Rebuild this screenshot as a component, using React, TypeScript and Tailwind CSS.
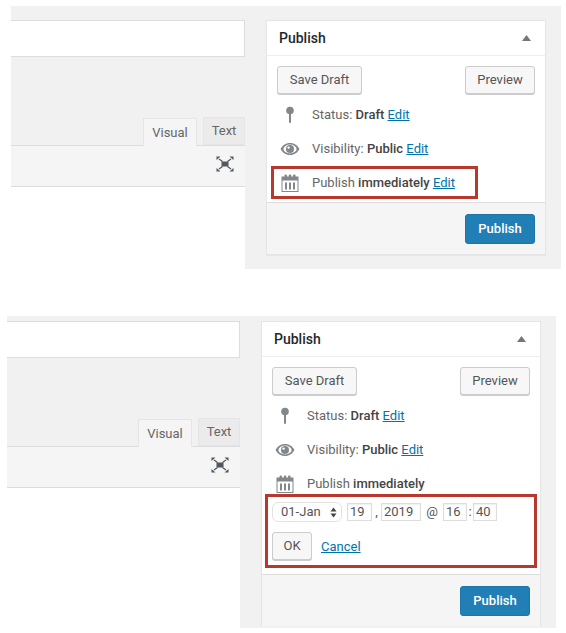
import type { ReactNode } from 'react'

const font = 'font-["Roboto",sans-serif]'

function PinIcon() {
  return (
    <svg width="10" height="18" viewBox="0 0 10 18" className="text-[#82878c]">
      <circle cx="5" cy="4.5" r="3.8" fill="currentColor" />
      <rect x="4" y="7" width="2" height="10" rx="1" fill="currentColor" />
    </svg>
  )
}

function EyeIcon() {
  return (
    <svg width="20" height="14" viewBox="0 0 20 14" className="text-[#82878c]">
      <path d="M10 1C5.6 1 2.2 3.6.6 7c1.6 3.4 5 6 9.4 6s7.8-2.6 9.4-6C17.8 3.6 14.4 1 10 1z" fill="currentColor" />
      <ellipse cx="10" cy="7" rx="6.6" ry="4.4" fill="#fff" />
      <circle cx="10" cy="7" r="4" fill="currentColor" />
      <circle cx="8.6" cy="5.6" r="1.2" fill="#fff" />
    </svg>
  )
}

function CalendarIcon() {
  return (
    <svg width="18" height="18" viewBox="0 0 18 18" className="text-[#82878c]">
      <rect x="1" y="3" width="16" height="14.5" fill="none" stroke="currentColor" strokeWidth="1" />
      <rect x="1" y="3" width="16" height="3.5" fill="currentColor" />
      <rect x="3.5" y="0.5" width="2.5" height="4" rx="1" fill="currentColor" />
      <rect x="7.8" y="0.5" width="2.5" height="4" rx="1" fill="currentColor" />
      <rect x="12" y="0.5" width="2.5" height="4" rx="1" fill="currentColor" />
      <rect x="4" y="8.5" width="2" height="7" fill="currentColor" />
      <rect x="8" y="8.5" width="2" height="7" fill="currentColor" />
      <rect x="12" y="8.5" width="2" height="7" fill="currentColor" />
    </svg>
  )
}

function ExpandIcon() {
  return (
    <svg width="18" height="16" viewBox="0 0 18 16" className="text-[#50575e]">
      <rect x="5.5" y="5.5" width="7" height="5" fill="currentColor" />
      <path d="M3 3l3.5 2.5M15 3l-3.500 2.500M3 13l3.500-2.500M15 13l-3.500-2.500" stroke="currentColor" strokeWidth="1.200" fill="none" />
      <path d="M0.500 0.500h4l-4 3.500zM17.500 0.500h-4l4 3.500zM0.500 15.500h4l-4-3.500zM17.500 15.500h-4l4-3.500z" fill="currentColor" />
    </svg>
  )
}

function EditLink({ children = 'Edit' }: { children?: ReactNode }) {
  return <a className="text-[#0073aa] underline">{children}</a>
}

function Button({ children, className = '' }: { children: ReactNode; className?: string }) {
  return (
    <button className={`h-7 rounded-[3px] border border-[#cccccc] bg-[#f7f7f7] text-[13px] text-[#555555] shadow-[0_1px_0_#cccccc] ${className}`}>
      {children}
    </button>
  )
}

function Row({ icon, children }: { icon: ReactNode; children: ReactNode }) {
  return (
    <div className="flex h-[34px] items-center text-[13px] text-[#666666]">
      <span className="flex w-[36px] justify-center pl-[1px] pr-[9px] ml-[-1px]">{icon}</span>
      <span>{children}</span>
    </div>
  )
}

function DateField({ value, className }: { value: string; className: string }) {
  return (
    <span className={`flex h-[18px] items-center border border-[#dddddd] pl-[2px] text-[13px] text-[#555555] shadow-[inset_0_1px_2px_rgba(0,0,0,0.07)] ${className}`}>
      {value}
    </span>
  )
}

function DateEditor() {
  return (
    <div className="mx-[-7px] mb-[6px] mt-[-7px] h-[74px] border-[3px] border-[#b7382c] bg-white pl-[4px] pt-[5px] text-[13px] text-[#555555]">
      <div className="flex h-5 items-center">
        <span className="flex h-5 w-[70px] items-center justify-between rounded-[6px] border border-[#e3e3e3] pl-[8px] pr-[4px]">
          01-Jan
          <svg width="7" height="11" viewBox="0 0 7 11" className="text-[#444444]">
            <path d="M3.500 0.500L6.500 4.500H0.500zM3.500 10.500L0.500 6.500H6.500z" fill="currentColor" />
          </svg>
        </span>
        <DateField value="19" className="ml-[5px] w-[25px]" />
        <span className="w-[9px] text-center">,</span>
        <DateField value="2019" className="w-10" />
        <span className="w-[22px] text-center">@</span>
        <DateField value="16" className="w-6" />
        <span className="w-[6px] text-center">:</span>
        <DateField value="40" className="w-6" />
      </div>
      <div className="mt-[10px] flex items-center">
        <Button className="w-10">OK</Button>
        <span className="ml-[9px] pt-[1px]">
          <EditLink>Cancel</EditLink>
        </span>
      </div>
    </div>
  )
}

function PublishBox({ editing }: { editing?: boolean }) {
  return (
    <div className="h-[304px] w-[280px] border border-[#e5e5e5] bg-white shadow-[0_1px_1px_rgba(0,0,0,0.04)] data-[short=true]:h-[235px]" data-short={!editing}>
      <div className="flex h-[35px] items-center justify-between border-b border-[#eeeeee] pl-3 pr-[14px]">
        <h2 className="text-[14px] font-medium text-[#23282d]">Publish</h2>
        <svg width="9" height="6" viewBox="0 0 9 6" className="text-[#72777c]">
          <path d="M4.500 0L9 6H0z" fill="currentColor" />
        </svg>
      </div>
      <div className="px-[10px] pt-[10px]">
        <div className="mb-[4px] flex justify-between">
          <Button className="w-[85px]">Save Draft</Button>
          <Button className="w-[70px]">Preview</Button>
        </div>
        <Row icon={<PinIcon />}>
          Status: <b className="font-medium text-[#444444]">Draft</b> <EditLink />
        </Row>
        <Row icon={<EyeIcon />}>
          Visibility: <b className="font-medium text-[#444444]">Public</b> <EditLink />
        </Row>
        {editing ? (
          <>
            <Row icon={<CalendarIcon />}>
              Publish <b className="font-medium text-[#444444]">immediately</b>
            </Row>
            <DateEditor />
          </>
        ) : (
          <div className="relative mb-[2px]">
            <Row icon={<CalendarIcon />}>
              Publish <b className="font-medium text-[#444444]">immediately</b> <EditLink />
            </Row>
            <div className="absolute left-[-6px] top-0 h-[33px] w-[207px] border-[3px] border-[#b7382c]" />
          </div>
        )}
      </div>
      <div className="flex h-[52px] items-start justify-end border-t border-[#dddddd] bg-[#f5f5f5] pr-[10px] pt-[11px]">
        <button className="h-[30px] w-[70px] rounded-[3px] border border-[#1d76a8] bg-[#217fb5] text-[13px] font-medium text-white">
          Publish
        </button>
      </div>
    </div>
  )
}

function Shot({ editing, className }: { editing?: boolean; className: string }) {
  return (
    <section className={`flex ${className}`}>
      <div className={`flex flex-1 flex-col bg-[#f1f1f1] ${editing ? 'pt-[5px]' : 'pt-[14px]'}`}>
        <div className="h-[37px] border-b border-r border-t border-[#dddddd] bg-white" />
        <div className="mt-[60px] flex h-[28px] items-end justify-end gap-[6px] pr-0 text-[13px] text-[#666666]">
          <span className="relative top-[1px] z-10 flex h-[28px] w-[54px] items-center justify-center border border-b-0 border-[#e5e5e5] bg-[#f5f5f5]">
            Visual
          </span>
          <span className="flex h-[28px] w-[42px] items-center justify-center border border-[#e5e5e5] bg-[#ebebeb]">
            Text
          </span>
        </div>
        <div className="flex h-[42px] items-start justify-end border-b border-t border-[#dddddd] bg-[#f5f5f5] pr-[11px] pt-[10px]">
          <ExpandIcon />
        </div>
        <div className="flex-1 bg-white" />
      </div>
      <div className={`w-[316px] bg-[#f1f1f1] pl-[21px] ${editing ? 'pt-[5px]' : 'pt-[14px]'}`}>
        <PublishBox editing={editing} />
      </div>
    </section>
  )
}

export default function App() {
  return (
    <div className={`h-[633px] w-[566px] overflow-hidden bg-white pt-[6px] ${font}`}>
      <Shot className="ml-[11px] h-[263px] w-[550px]" />
      <Shot editing className="ml-[7px] mt-[47px] h-[312px] w-[549px]" />
    </div>
  )
}
